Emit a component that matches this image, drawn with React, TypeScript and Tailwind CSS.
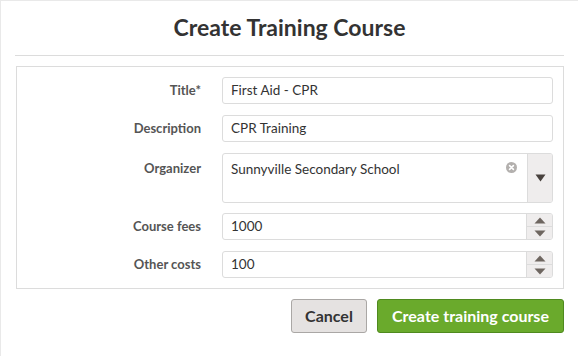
import React from "react";

function Spinner() {
  return (
    <div className="flex w-[26px] shrink-0 flex-col border-l border-[#dcdcdc] bg-[#efeded]">
      <div className="flex flex-1 items-center justify-center border-b border-[#dcdcdc]">
        <svg width="12" height="7" viewBox="0 0 12 7"><path d="M6 0.5L11.5 6.5H0.5Z" fill="#6e6660" /></svg>
      </div>
      <div className="flex flex-1 items-center justify-center">
        <svg width="12" height="7" viewBox="0 0 12 7"><path d="M0.5 0.5H11.5L6 6.5Z" fill="#6e6660" /></svg>
      </div>
    </div>
  );
}

function Row({ label, children, top }: { label: string; children: React.ReactNode; top?: boolean }) {
  return (
    <div className={`flex gap-[21px] ${top ? "items-start" : "items-center"}`}>
      <div className={`w-[184px] shrink-0 text-right text-[13px] font-bold text-[#555] ${top ? "pt-[6px]" : ""}`}>{label}</div>
      {children}
    </div>
  );
}

function TextInput({ value, spinner }: { value: string; spinner?: boolean }) {
  return (
    <div className="flex h-[27px] w-[331px] overflow-hidden rounded-[3px] border border-[#dcdcdc] bg-white">
      <div className="flex flex-1 items-center pl-[8px] text-[13.5px] text-[#333]">{value}</div>
      {spinner && <Spinner />}
    </div>
  );
}

export default function App() {
  return (
    <div className="h-[356px] w-[578px] border-l border-t border-[#e9e9e9] bg-white" style={{ fontFamily: "Lato, 'Open Sans', sans-serif" }}>
      <h1 className="flex h-[54px] items-center justify-center pb-[2px] text-[23px] font-bold text-[#333]">Create Training Course</h1>
      <div className="mx-[14px] border-t border-[#dcdcdc]" />
      <div className="ml-[15px] mt-[10px] flex w-[548px] flex-col gap-[11px] border border-[#dcdcdc] pb-[10px] pt-[10px]">
        <Row label="Title*">
          <TextInput value="First Aid - CPR" />
        </Row>
        <Row label="Description">
          <TextInput value="CPR Training" />
        </Row>
        <Row label="Organizer" top>
          <div className="flex h-[50px] w-[331px] overflow-hidden rounded-[3px] border border-[#dcdcdc] bg-white">
            <div className="flex flex-1 items-start justify-between pl-[8px] pr-[10px] pt-[5px] text-[13.5px] text-[#333]">
              <span>Sunnyville Secondary School</span>
              <svg width="11" height="11" viewBox="0 0 11 11" className="mt-[3px]">
                <circle cx="5.5" cy="5.5" r="5.5" fill="#b3b0ae" />
                <path d="M3.6 3.6L7.4 7.4M7.4 3.6L3.6 7.4" stroke="#fff" strokeWidth="1.6" strokeLinecap="round" />
              </svg>
            </div>
            <div className="flex w-[25px] shrink-0 items-center justify-center border-l border-[#dcdcdc] bg-[#efeded]">
              <svg width="11" height="8" viewBox="0 0 11 8"><path d="M0.5 0.5H10.5L5.5 7.5Z" fill="#48423e" /></svg>
            </div>
          </div>
        </Row>
        <div className="-mt-[1px]">
          <Row label="Course fees">
            <TextInput value="1000" spinner />
          </Row>
        </div>
        <Row label="Other costs">
          <TextInput value="100" spinner />
        </Row>
      </div>
      <div className="mr-[14px] mt-[10px] flex justify-end gap-[10px]">
        <button className="h-[34px] w-[76px] rounded-[3px] border border-[#aaa7a5] bg-[#e5e2e1] text-[16px] font-bold text-[#333]">Cancel</button>
        <button className="h-[34px] w-[187px] rounded-[3px] border border-[#4f8a1f] bg-[#6aaa2c] text-[16px] font-bold text-white">Create training course</button>
      </div>
    </div>
  );
}
